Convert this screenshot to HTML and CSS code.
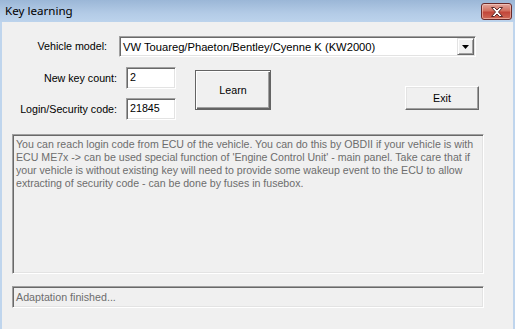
FILE: index.html
```html
<!DOCTYPE html>
<html lang="en">
<head>
    <meta charset="UTF-8">
    <title>Key learning</title>
    <link rel="stylesheet" href="styles.css">
</head>
<body>
    <div class="window">
        <!-- Title bar -->
        <div class="titlebar">
            <span class="title">Key learning</span>
            <button class="close">
                <svg width="14" height="10" viewBox="0 0 14 10"><polygon points="1.5,0.5 4.5,0.5 7,3 9.5,0.5 12.5,0.5 8.5,5 12.5,9.5 9.5,9.5 7,7 4.5,9.5 1.5,9.5 5.5,5" fill="#fff" stroke="#5a2a2a" stroke-width="1"/></svg>
            </button>
        </div>

        <div class="client">
            <div class="row model-row">
                <label class="label model-label">Vehicle model:</label>
                <div class="combo">
                    <span class="combo-text">VW Touareg/Phaeton/Bentley/Cyenne K (KW2000)</span>
                    <span class="combo-btn">
                        <svg width="7" height="4" viewBox="0 0 7 4"><polygon points="0,0 7,0 3.5,4" fill="#000"/></svg>
                    </span>
                </div>
            </div>

            <div class="row key-row">
                <div class="fields">
                    <div class="field">
                        <label class="label field-label">New key count:</label>
                        <div class="edit">2</div>
                    </div>
                    <div class="field">
                        <label class="label field-label">Login/Security code:</label>
                        <div class="edit">21845</div>
                    </div>
                </div>
                <button class="btn btn-default learn">Learn</button>
                <button class="btn exit">Exit</button>
            </div>

            <div class="memo">You can reach login code from ECU of the vehicle. You can do this by OBDII if your vehicle is with<br>ECU ME7x -&gt; can be used special function of 'Engine Control Unit' - main panel. Take care that if<br>your vehicle is without existing key will need to provide some wakeup event to the ECU to allow<br>extracting of security code - can be done by fuses in fusebox.</div>

            <div class="status">Adaptation finished...</div>
        </div>
    </div>
</body>
</html>
```

FILE: styles.css
```css
* {
    margin: 0;
    padding: 0;
    box-sizing: border-box;
}
body {
    width: 515px;
    height: 329px;
    overflow: hidden;
    background: #bfd5ed;
    font-family: "Liberation Sans", Arial, sans-serif;
    font-size: 10.7px;
    color: #000;
}
/* Window frame */
.window {
    display: flex;
    flex-direction: column;
    height: 100%;
}
.titlebar {
    height: 22px;
    display: flex;
    align-items: flex-start;
    justify-content: space-between;
    background: linear-gradient(#9bb7d7, #b3cbe6 60%, #bcd3ec);
}
.title {
    font-family: "Noto Sans", sans-serif;
    font-size: 11.6px;
    color: #000;
    padding: 3px 0 0 5px;
}
.close {
    width: 31px;
    height: 17px;
    margin: 3px 3px 0 0;
    border: 1px solid #6b2a2a;
    border-radius: 3px;
    background: linear-gradient(#e2a69d, #d2705f 45%, #c2463a 55%, #cf6a58);
    box-shadow: inset 0 0 0 1px rgba(255, 220, 210, 0.5);
    display: flex;
    align-items: center;
    justify-content: center;
}
.client {
    flex: 1;
    margin: 0 2px;
    background: #f0f0f0;
    padding: 14px 0 0 10px;
}
/* Rows */
.row {
    display: flex;
}
.label {
    text-align: right;
    line-height: 21px;
}
.model-label {
    width: 95px;
    margin-right: 12px;
}
.combo {
    width: 357px;
    height: 21px;
    display: flex;
    align-items: center;
    justify-content: space-between;
    background: #fff;
    border: 1px solid;
    border-color: #a0a0a0 #fff #fff #a0a0a0;
    box-shadow: inset 1px 1px #696969, inset -1px -1px #e3e3e3;
    padding: 1px 1px 1px 3px;
}
.combo-text {
    padding-top: 1px;
    font-size: 11.2px;
}
.combo-btn {
    width: 17px;
    height: 17px;
    display: flex;
    align-items: center;
    justify-content: center;
    background: #f0f0f0;
    border: 1px solid;
    border-color: #e3e3e3 #696969 #696969 #e3e3e3;
    box-shadow: inset 1px 1px #fff, inset -1px -1px #a0a0a0;
}
.key-row {
    margin-top: 10px;
    align-items: flex-start;
}
.fields {
    display: flex;
    flex-direction: column;
    gap: 9px;
}
.field {
    display: flex;
}
.field-label {
    width: 105px;
    margin-right: 9px;
    line-height: 22px;
}
.edit {
    width: 50px;
    height: 22px;
    background: #fff;
    border: 1px solid;
    border-color: #a0a0a0 #fff #fff #a0a0a0;
    box-shadow: inset 1px 1px #696969, inset -1px -1px #e3e3e3;
    padding: 3px 0 0 3px;
}
/* Buttons */
.btn {
    font-family: inherit;
    font-size: inherit;
    color: #000;
    background: #f0f0f0;
    border: 1px solid;
    border-color: #fff #696969 #696969 #fff;
    box-shadow: inset -1px -1px #a0a0a0, inset 1px 1px #e3e3e3;
}
.btn-default {
    border-color: #646464;
    box-shadow: inset 1px 1px #fff, inset -1px -1px #646464, inset -2px -2px #a0a0a0;
}
.learn {
    width: 76px;
    height: 40px;
    margin: 3px 0 0 19px;
}
.exit {
    width: 74px;
    height: 24px;
    margin: 19px 0 0 134px;
}
/* Info boxes */
.memo,
.status {
    width: 472px;
    color: #6d6d6d;
    background: #f0f0f0;
    border: 1px solid;
    border-color: #a0a0a0 #fff #fff #a0a0a0;
    box-shadow: inset 1px 1px #696969, inset -1px -1px #e3e3e3;
    white-space: nowrap;
}
.memo {
    height: 140px;
    margin-top: 14px;
    padding: 3px 0 0 3px;
    line-height: 13px;
    font-size: 10.6px;
}
.status {
    height: 22px;
    margin-top: 12px;
    padding: 4px 0 0 3px;
}
```
